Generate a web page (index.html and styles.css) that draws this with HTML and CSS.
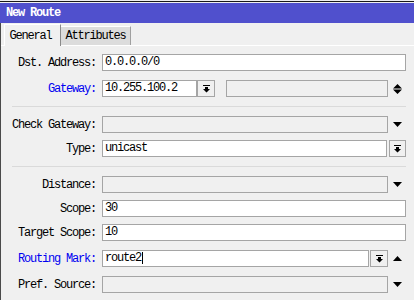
FILE: index.html
```html
<!DOCTYPE html>
<html>
<head>
<meta charset="utf-8">
<link rel="stylesheet" href="styles.css">
</head>
<body>
<div class="win">
  <div class="topstrip"></div>
  <div class="title">New Route</div>
  <div class="frame">
    <div class="tabs">
      <div class="tab active">General</div>
      <div class="tab other">Attributes</div>
    </div>
    <div class="panel">
      <div class="row first">
        <div class="lbl">Dst. Address:</div>
        <div class="fields"><div class="inp">0.0.0.0/0</div></div>
      </div>
      <div class="row">
        <div class="lbl blue">Gateway:</div>
        <div class="fields">
          <div class="inp gw">10.255.100.2</div>
          <div class="btn"><svg width="7" height="8" viewBox="0 0 7 8"><rect width="7" height="1"/><path d="M2 2h3v2h2L3.5 7.5 0 4h2z"/></svg></div>
          <div class="inp dis gw2"></div>
          <div class="arrow"><svg width="9" height="10" viewBox="0 0 9 10"><path d="M4.5 0L9 4.5H0z M0 5.5h9L4.5 10z"/></svg></div>
        </div>
      </div>
      <div class="sep"></div>
      <div class="row">
        <div class="lbl">Check Gateway:</div>
        <div class="fields">
          <div class="inp dis"></div>
          <div class="arrow"><svg width="9" height="5" viewBox="0 0 9 5"><path d="M0 0h9L4.5 5z"/></svg></div>
        </div>
      </div>
      <div class="row tight">
        <div class="lbl">Type:</div>
        <div class="fields type">
          <div class="inp">unicast</div>
          <div class="btn sq"><svg width="7" height="8" viewBox="0 0 7 8"><rect width="7" height="1"/><path d="M2 2h3v2h2L3.5 7.5 0 4h2z"/></svg></div>
        </div>
      </div>
      <div class="sep"></div>
      <div class="row">
        <div class="lbl">Distance:</div>
        <div class="fields">
          <div class="inp dis"></div>
          <div class="arrow"><svg width="9" height="5" viewBox="0 0 9 5"><path d="M0 0h9L4.5 5z"/></svg></div>
        </div>
      </div>
      <div class="row tight">
        <div class="lbl">Scope:</div>
        <div class="fields"><div class="inp">30</div></div>
      </div>
      <div class="row tight">
        <div class="lbl">Target Scope:</div>
        <div class="fields"><div class="inp">10</div></div>
      </div>
      <div class="row">
        <div class="lbl blue">Routing Mark:</div>
        <div class="fields mark">
          <div class="inp">route2<span class="caret"></span></div>
          <div class="btn"><svg width="7" height="8" viewBox="0 0 7 8"><rect width="7" height="1"/><path d="M2 2h3v2h2L3.5 7.5 0 4h2z"/></svg></div>
          <div class="arrow"><svg width="9" height="5" viewBox="0 0 9 5"><path d="M4.5 0L9 5H0z"/></svg></div>
        </div>
      </div>
      <div class="row">
        <div class="lbl">Pref. Source:</div>
        <div class="fields">
          <div class="inp dis"></div>
          <div class="arrow"><svg width="9" height="5" viewBox="0 0 9 5"><path d="M0 0h9L4.5 5z"/></svg></div>
        </div>
      </div>
    </div>
  </div>
</div>
</body>
</html>
```

FILE: styles.css
```css
html, body {
  margin: 0;
  padding: 0;
}
body {
  width: 414px;
  height: 300px;
  overflow: hidden;
  background: #f0f0f0;
  font-family: "Liberation Mono", "DejaVu Sans Mono", monospace;
  font-size: 12px;
  letter-spacing: -1.2px;
  color: #000;
}
.win {
  width: 414px;
  height: 300px;
  display: flex;
  flex-direction: column;
}
.topstrip {
  height: 1px;
  margin: 1px 0 1px 0;
  background: #1a1a1a;
}
.title {
  height: 20px;
  line-height: 20px;
  background: #5050cd;
  color: #fff;
  font-weight: bold;
  padding-left: 6px;
}
.frame {
  flex: 1;
  border-left: 1px solid #4a4a4a;
}
.tabs {
  height: 22px;
  display: flex;
  align-items: flex-end;
  padding-left: 3px;
  border-bottom: 1px solid #fff;
}
.tab {
  box-sizing: border-box;
  display: flex;
  align-items: center;
  justify-content: center;
}
.tab.active {
  width: 57px;
  height: 22px;
  margin-bottom: -1px;
  background: #f0f0f0;
  border-top: 1px solid #fff;
  border-left: 1px solid #fff;
  border-right: 1px solid #8a8a8a;
  position: relative;
  padding-right: 4px;
}
.tab.other {
  width: 70px;
  height: 19px;
  background: #dcdcdc;
  border-top: 1px solid #fff;
  border-right: 1px solid #a0a0a0;
}
.panel {
  padding-top: 8px;
  display: flex;
  flex-direction: column;
}
.row {
  height: 17px;
  display: flex;
  align-items: center;
  margin-top: 9px;
}
.row.first { margin-top: 0; }
.row.tight { margin-top: 7px; }
.lbl {
  width: 95px;
  flex: none;
  text-align: right;
  white-space: nowrap;
}
.lbl.blue { color: #0000f0; }
.fields {
  flex: 1;
  display: flex;
  align-items: center;
  margin-left: 6px;
  margin-right: 8px;
  height: 17px;
}
.inp {
  flex: 1;
  box-sizing: border-box;
  height: 17px;
  line-height: 15px;
  border: 1px solid #a5a5a5;
  background: #fff;
  padding-left: 2px;
  white-space: nowrap;
}
.inp.dis { background: #f0f0f0; }
.inp.gw { flex: none; width: 95px; }
.inp.gw2 { margin-left: 11px; }
.btn {
  flex: none;
  box-sizing: border-box;
  width: 18px;
  height: 17px;
  border: 1px solid #a5a5a5;
  background: #f0f0f0;
  display: flex;
  align-items: center;
  justify-content: center;
}
.fields.type .btn { width: 17px; margin-left: 2px; }
.fields.mark .btn { margin-left: 1px; }
.arrow {
  flex: none;
  width: 18px;
  height: 17px;
  display: flex;
  align-items: center;
  justify-content: center;
}
.caret {
  display: inline-block;
  width: 1px;
  height: 12px;
  background: #000;
  vertical-align: middle;
  margin-left: 1px;
}
.sep {
  height: 1px;
  background: #dadada;
  margin: 9px 8px 0 11px;
}
```
